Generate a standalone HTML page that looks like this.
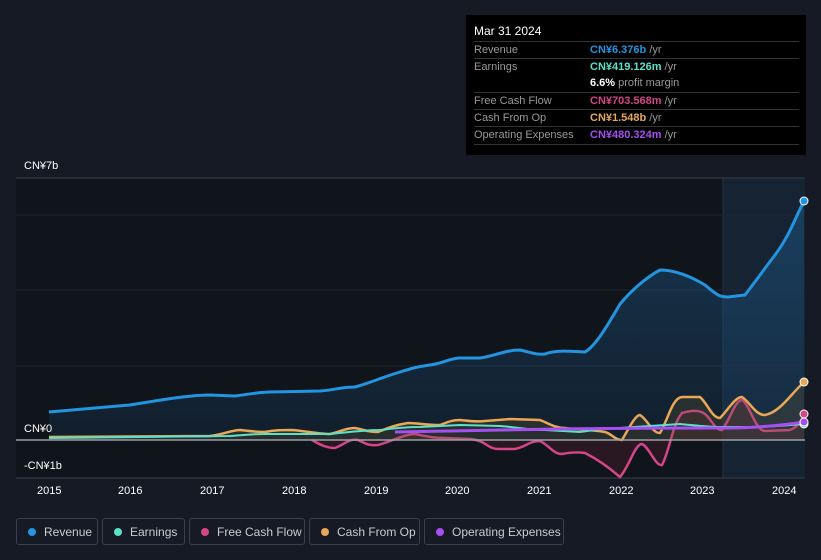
<!DOCTYPE html><html><head><style>
body{margin:0;width:821px;height:560px;background:#151a24;font-family:"Liberation Sans",sans-serif;overflow:hidden;position:relative}
.tt{position:absolute;left:466px;top:15px;width:340px;height:140px;background:#000;color:#fff;font-size:11px}
.tt .h{position:absolute;left:8px;top:9px;font-size:12px}
.r{position:absolute;left:8px;width:325px;height:17px;border-top:1px solid #333;color:#999;line-height:17px}
.r span{position:absolute;left:116px}
.lg{position:absolute;top:518px;height:27px;border:1px solid #3a3f4a;border-radius:3px;color:#ccc;font-size:12px;line-height:27px;box-sizing:border-box;padding-left:27px}
.lg i{position:absolute;left:11px;top:9px;width:8px;height:8px;border-radius:50%}
.ax{position:absolute;color:#fff;font-size:11px}
</style></head><body>
<svg width="821" height="560" style="position:absolute;left:0;top:0">
<defs><linearGradient id="rg" x1="0" y1="0" x2="0" y2="1"><stop offset="0" stop-color="#1d5a8a" stop-opacity=".5"/><stop offset="1" stop-color="#1d5a8a" stop-opacity=".15"/></linearGradient></defs>
<rect x="16" y="178" width="789" height="300" fill="#10141b"/>
<rect x="723" y="178" width="82" height="300" fill="#152333"/>
<line x1="723" y1="178" x2="723" y2="478" stroke="#22303f"/>
<line x1="16" y1="178" x2="805" y2="178" stroke="#3a404a"/>
<g stroke="#1f2530"><line x1="16" y1="215" x2="805" y2="215"/><line x1="16" y1="290" x2="805" y2="290"/><line x1="16" y1="366" x2="805" y2="366"/></g>
<line x1="16" y1="478" x2="805" y2="478" stroke="#3a404a"/>
<path d="M49,412 L130,405 C160,400 190,395 210,395 L235,396 C250,394 260,392 270,392 L320,391 C335,390 340,387 355,387 C370,383 380,378 400,372 C410,369 415,367 430,365 C445,363 450,358 460,358 L480,358 C495,356 505,350 520,350 C530,352 535,355 545,354 C555,350 570,351 585,352 C595,346 605,330 620,304 C630,292 645,278 660,270 C675,270 690,276 705,285 C715,293 718,297 728,297 L745,295 C755,282 765,268 775,255 C790,235 795,218 804,201 L804,440 L49,440Z" fill="url(#rg)"/>
<path d="M49,412 L130,405 C160,400 190,395 210,395 L235,396 C250,394 260,392 270,392 L320,391 C335,390 340,387 355,387 C370,383 380,378 400,372 C410,369 415,367 430,365 C445,363 450,358 460,358 L480,358 C495,356 505,350 520,350 C530,352 535,355 545,354 C555,350 570,351 585,352 C595,346 605,330 620,304 C630,292 645,278 660,270 C675,270 690,276 705,285 C715,293 718,297 728,297 L745,295 C755,282 765,268 775,255 C790,235 795,218 804,201" fill="none" stroke="#2394df" stroke-width="3"/>
<path d="M312,440 C322,446 328,448 335,448 C345,444 350,438 358,440 C366,444 370,446 378,445 C390,442 405,434 415,434 C425,436 432,438 445,438 L470,439 C485,440 488,449 498,449 L515,449 C525,447 530,441 540,441 C550,446 553,454 562,454 C572,452 578,452 585,453 C595,458 605,464 620,477 C630,465 635,444 642,444 C650,448 655,466 662,465 C670,450 672,425 682,413 C692,410 700,410 705,414 C712,420 715,430 722,430 C730,420 735,400 742,400 C750,405 755,430 765,431 L790,430 C798,427 802,420 804,414 L804,440 Z" fill="#5a1f30" fill-opacity=".35"/>
<path d="M312,440 C322,446 328,448 335,448 C345,444 350,438 358,440 C366,444 370,446 378,445 C390,442 405,434 415,434 C425,436 432,438 445,438 L470,439 C485,440 488,449 498,449 L515,449 C525,447 530,441 540,441 C550,446 553,454 562,454 C572,452 578,452 585,453 C595,458 605,464 620,477 C630,465 635,444 642,444 C650,448 655,466 662,465 C670,450 672,425 682,413 C692,410 700,410 705,414 C712,420 715,430 722,430 C730,420 735,400 742,400 C750,405 755,430 765,431 L790,430 C798,427 802,420 804,414" fill="none" stroke="#d44688" stroke-width="2.5"/>
<path d="M49,437 L210,436 C225,434 232,430 240,430 C250,431 255,432 265,432 C275,430 282,430 292,430 C305,431 318,434 330,434 C340,432 345,428 355,428 C365,430 368,432 378,432 C388,428 395,425 408,423 C418,423 425,425 440,425 C448,422 452,420 460,420 C470,421 475,422 485,421 L510,419 L540,420 C550,424 555,428 565,428 C580,430 595,430 605,432 C612,434 615,440 622,440 C628,430 635,415 640,415 C648,420 652,433 660,433 C668,420 672,398 682,397 L700,397 C708,404 712,418 720,418 C728,410 735,397 742,397 C750,402 755,415 765,415 C780,412 790,395 804,382 L804,440 L49,440Z" fill="#6b5a30" fill-opacity=".25"/>
<path d="M49,437 L210,436 C225,434 232,430 240,430 C250,431 255,432 265,432 C275,430 282,430 292,430 C305,431 318,434 330,434 C340,432 345,428 355,428 C365,430 368,432 378,432 C388,428 395,425 408,423 C418,423 425,425 440,425 C448,422 452,420 460,420 C470,421 475,422 485,421 L510,419 L540,420 C550,424 555,428 565,428 C580,430 595,430 605,432 C612,434 615,440 622,440 C628,430 635,415 640,415 C648,420 652,433 660,433 C668,420 672,398 682,397 L700,397 C708,404 712,418 720,418 C728,410 735,397 742,397 C750,402 755,415 765,415 C780,412 790,395 804,382" fill="none" stroke="#e8a857" stroke-width="2.5"/>
<path d="M49,438 L230,436 C245,435 250,434 265,434 L330,434 C350,432 365,430 380,430 C395,428 405,427 420,427 L460,425 L500,426 C515,427 530,430 545,430 L580,432 C595,430 605,428 620,428 L680,424 C700,426 710,427 720,427 L760,427 C780,426 790,425 804,424" fill="none" stroke="#5ce0c8" stroke-width="2"/>
<path d="M395,432 C450,431 500,430 560,429 C620,428 680,428 720,428 C760,428 785,425 804,422" fill="none" stroke="#a54ff0" stroke-width="3"/>
<line x1="16" y1="440" x2="805" y2="440" stroke="#9aa0a8" stroke-width="1.5"/>
<g stroke="#fff" stroke-width="1"><circle cx="804" cy="201" r="4" fill="#2394df"/><circle cx="804" cy="382" r="4" fill="#e8a857"/><circle cx="804" cy="414" r="4" fill="#d44688"/><circle cx="804" cy="424" r="4" fill="#5ce0c8"/><circle cx="804" cy="422" r="4" fill="#a54ff0"/></g>
</svg>
<div class="ax" style="left:24px;top:160px">CN¥7b</div>
<div class="ax" style="left:24px;top:423px">CN¥0</div>
<div class="ax" style="left:24px;top:460px">-CN¥1b</div>
<div class="ax" style="left:37px;top:485px">2015</div><div class="ax" style="left:118px;top:485px">2016</div><div class="ax" style="left:200px;top:485px">2017</div><div class="ax" style="left:282px;top:485px">2018</div><div class="ax" style="left:364px;top:485px">2019</div><div class="ax" style="left:445px;top:485px">2020</div><div class="ax" style="left:527px;top:485px">2021</div><div class="ax" style="left:609px;top:485px">2022</div><div class="ax" style="left:690px;top:485px">2023</div><div class="ax" style="left:772px;top:485px">2024</div>
<div class="tt"><div class="h">Mar 31 2024</div>
<div class="r" style="top:26px">Revenue<span><b style="color:#2394df;font-weight:bold">CN¥6.376b</b> /yr</span></div>
<div class="r" style="top:43px">Earnings<span><b style="color:#5ce0c8">CN¥419.126m</b> /yr</span></div>
<div class="r" style="top:60px;border:0"><span><b style="color:#fff">6.6%</b> profit margin</span></div>
<div class="r" style="top:77px">Free Cash Flow<span><b style="color:#d44688">CN¥703.568m</b> /yr</span></div>
<div class="r" style="top:94px">Cash From Op<span><b style="color:#e8a857">CN¥1.548b</b> /yr</span></div>
<div class="r" style="top:111px;border-bottom:1px solid #333">Operating Expenses<span><b style="color:#a54ff0">CN¥480.324m</b> /yr</span></div>
</div>
<div class="lg" style="left:16px;width:82px"><i style="background:#2394df"></i>Revenue</div>
<div class="lg" style="left:102px;width:83px"><i style="background:#5ce0c8"></i>Earnings</div>
<div class="lg" style="left:189px;width:116px"><i style="background:#d44688"></i>Free Cash Flow</div>
<div class="lg" style="left:309px;width:111px"><i style="background:#e8a857"></i>Cash From Op</div>
<div class="lg" style="left:424px;width:140px"><i style="background:#a54ff0"></i>Operating Expenses</div>
</body></html>
